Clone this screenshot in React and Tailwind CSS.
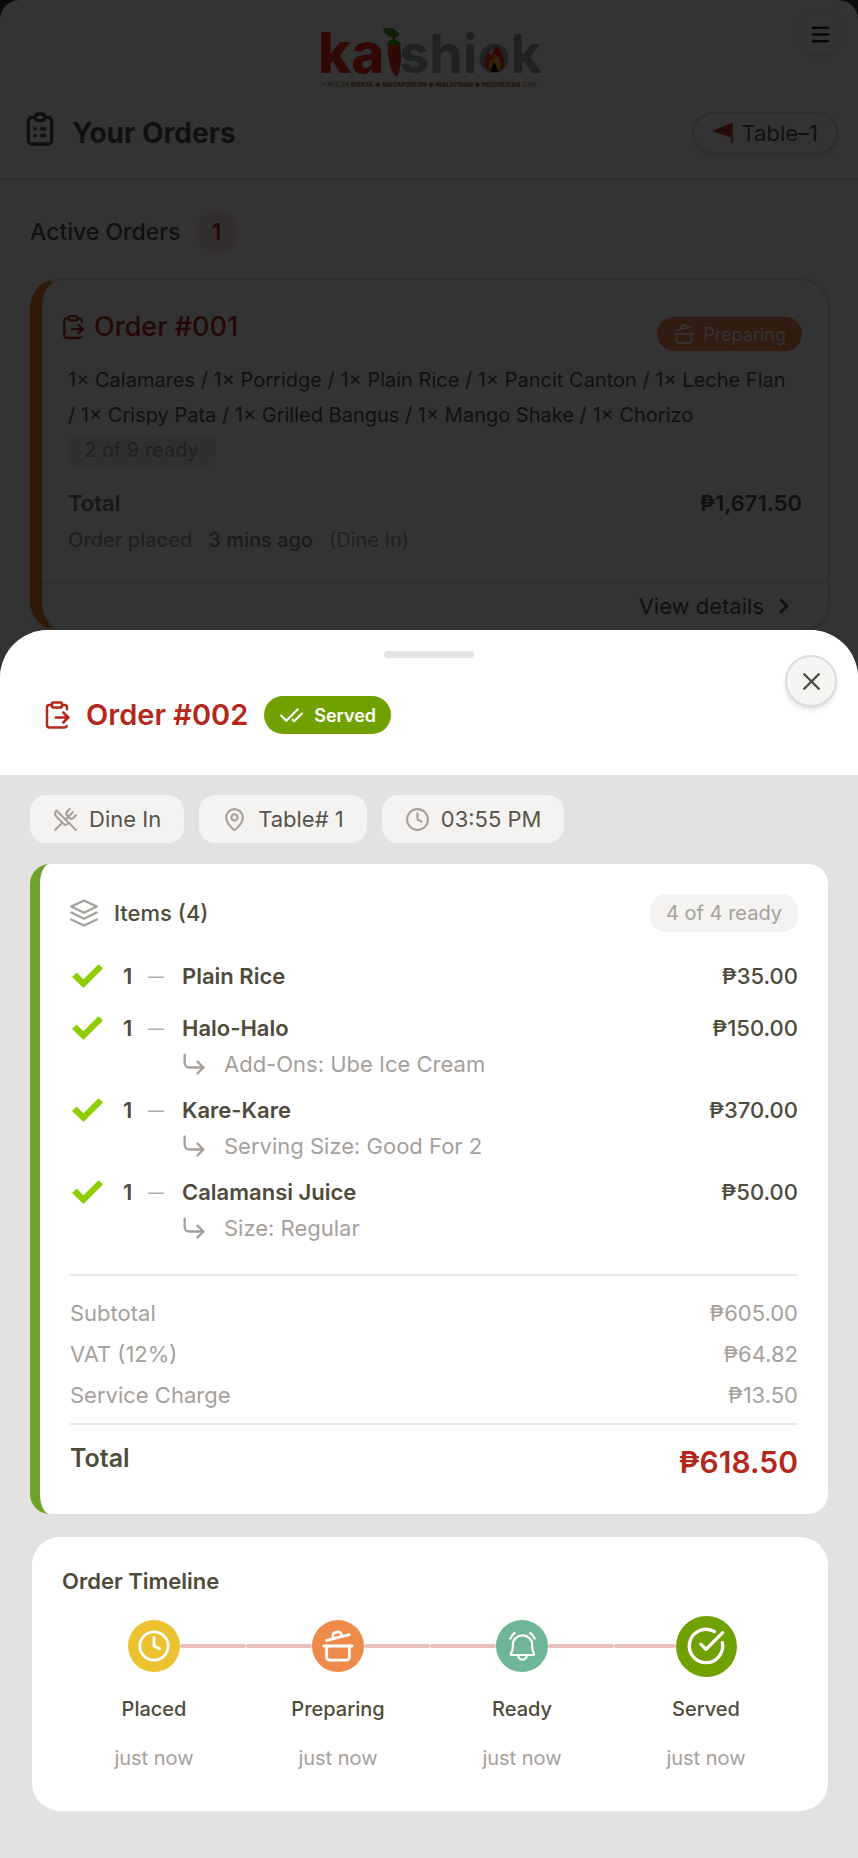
import React, { useState } from 'react';
import {
  CheckCheck,
  ChevronRight,
  CircleCheckBig,
  ClipboardPaste,
  Clock,
  CookingPot,
  CornerDownRight,
  MapPin,
  Menu,
  UtensilsCrossed,
  X,
} from 'lucide-react';
import { TbClipboardList } from 'react-icons/tb';

const activeItems = [
  'Calamares',
  'Porridge',
  'Plain Rice',
  'Pancit Canton',
  'Leche Flan',
  'Crispy Pata',
  'Grilled Bangus',
  'Mango Shake',
  'Chorizo',
];

const orderItems = [
  { qty: 1, name: 'Plain Rice', price: '₱35.00' },
  { qty: 1, name: 'Halo-Halo', price: '₱150.00', note: 'Add-Ons: Ube Ice Cream' },
  { qty: 1, name: 'Kare-Kare', price: '₱370.00', note: 'Serving Size: Good For 2' },
  { qty: 1, name: 'Calamansi Juice', price: '₱50.00', note: 'Size: Regular' },
];

const charges = [
  { label: 'Subtotal', amount: '₱605.00' },
  { label: 'VAT (12%)', amount: '₱64.82' },
  { label: 'Service Charge', amount: '₱13.50' },
];

const timeline = [
  { label: 'Placed', time: 'just now', icon: Clock, size: 34, circle: 'h-[52px] w-[52px] bg-[#edc231]' },
  { label: 'Preparing', time: 'just now', icon: CookingPot, size: 34, circle: 'h-[52px] w-[52px] bg-[#ee8a4a]' },
  { label: 'Ready', time: 'just now', icon: BellIcon, size: 29, circle: 'h-[52px] w-[52px] bg-[#6fb597]' },
  { label: 'Served', time: 'just now', icon: CircleCheckBig, size: 40, circle: 'h-[61px] w-[61px] bg-[#70a100]' },
];

function Logo() {
  return (
    <svg
      width="224"
      height="64"
      viewBox="0 0 224 64"
      role="img"
      aria-label="kaishiok"
      fontFamily="Inter, sans-serif"
      className="overflow-visible"
    >
      <text x="-3" y="45" fontSize="56" fontWeight="800" fill="#f03018">ka</text>
      <text x="78" y="45" fontSize="54" fontWeight="700" fill="#a3a3a8">shiok</text>
      {/* chili */}
      <path d="M67 18c1-6 10-7 12 0 2 10 1 24-3 31-3-2-6-7-7-13-2-7-3-12-2-18z" fill="#f03018" />
      <path d="M66 18c0-5 3-6 6-6 4 0 8 1 8 6-3-2-4-1-6 1-2-3-5-3-8-1z" fill="#4f9a1c" />
      <path d="M73 14c-1-4 1-7 5-8" stroke="#4f9a1c" strokeWidth="2.5" fill="none" />
      <path d="M62 1c8-3 15 0 15 7-6 3-13 0-15-7z" fill="#4f9a1c" />
      {/* flame */}
      <path d="M174 16c5 5 9 11 9 17 0 7-4 11-9 11s-11-4-10-11c0-4 2-6 3-9l3 3c2-3 4-6 4-11z" fill="#f03018" />
      <path d="M174 26c4 3 6 7 6 11s-3 6-6 6-7-2-6-7c0-2 1-3 2-5l2 2z" fill="#f5b52a" />
      <path d="M173 34l2 3 2 7h-7l1-6z" fill="#000" />
      <text x="0" y="59" fontSize="6" fontWeight="400" fill="#9a7340">
        POPULAR <tspan fontWeight="800">BISAYA ◆ SINGAPOREAN ◆ MALAYSIAN ◆ INDONESIAN</tspan> DISH
      </text>
    </svg>
  );
}

function FlagIcon() {
  return (
    <svg width="21" height="20" viewBox="0 0 21 20" aria-hidden="true">
      <path d="M0 8 20 0v15z" fill="#c8322a" />
      <path d="M20 0v20" stroke="#b0683c" strokeWidth="2" />
    </svg>
  );
}

function StackIcon() {
  return (
    <svg width="28" height="28" viewBox="0 0 28 28" fill="none" stroke="#a6a09b" strokeWidth="2.2" strokeLinecap="round" strokeLinejoin="round" aria-hidden="true">
      <path d="M1.2 7.6 14 1.4l12.8 6.2L14 13.8z" />
      <path d="M1.2 13.6 14 19.8l12.8-6.2" />
      <path d="M1.2 20.4 14 26.6l12.8-6.2" />
    </svg>
  );
}

function DoneIcon() {
  return (
    <svg width="31" height="24" viewBox="0 0 31 24" fill="#8fcd00" stroke="#8fcd00" strokeWidth="2" strokeLinejoin="round" aria-hidden="true">
      <path d="M1.3 12.9 4.6 9.9l6.8 6.8L26.5 1.6l3.100 2.900L11.400 22.600z" />
    </svg>
  );
}

function BellIcon({ size }) {
  return (
    <svg width={size} height={size} viewBox="0 0 26 29" fill="none" stroke="currentColor" strokeWidth="2.2" strokeLinecap="round" strokeLinejoin="round" aria-hidden="true">
      <path d="M2.2 23c-.8 0-1.1-.8-.7-1.5C2.7 19.5 3.3 17.5 3.3 15v-2.300a9.700 9.300 0 0 1 19.400 0V15c0 2.500.6 4.500 1.800 6.500.4.700.1 1.500-.7 1.500z" />
      <path d="M8.8 23.500a4.200 4.200 0 0 0 8.400 0" />
      <path d="M.8 6.500C1.800 4.300 3.300 2.200 5.200 1" />
      <path d="M25.200 6.500C24.200 4.300 22.700 2.200 20.800 1" />
    </svg>
  );
}

function OrdersPage() {
  return (
    <div className="min-h-screen rounded-t-[20px] bg-white pt-4">
      <header className="border-b-2 border-[#e7e5e4]">
        <div className="relative flex h-[76px] items-start justify-center pt-3 pl-2">
          <Logo />
          <button
            type="button"
            aria-label="Open menu"
            className="absolute top-0 right-5 flex h-9 w-9 items-center justify-center rounded-lg text-black shadow-[0_1px_6px_rgba(0,0,0,0.15)]"
          >
            <Menu size={23} strokeWidth={2} />
          </button>
        </div>
        <div className="flex items-center justify-between px-5 pt-5 pb-6">
          <h1 className="flex items-center gap-3 text-[28px] leading-[42px] font-bold text-[#57534a]">
            <TbClipboardList size={40} className="-mt-2" />
            Your Orders
          </h1>
          <button
            type="button"
            className="flex h-[42px] items-center gap-2 rounded-full border-2 border-[#dcdad6] px-[18px] text-[22px] text-[#57534a] shadow-md"
          >
            <FlagIcon />
            Table–1
          </button>
        </div>
      </header>

      <main className="px-7 pt-[30px]">
        <h2 className="flex items-center gap-4 px-[2px] text-[23px] font-medium text-[#57534a]">
          Active Orders
          <span className="flex h-[44px] w-[40px] items-center justify-center rounded-full bg-[#f3e6e0] font-semibold text-[#b3281a]">1</span>
        </h2>

        <article className="mt-6 ml-[2px] rounded-[30px] border-2 border-l-[12px] border-[#e7e5e4] border-l-[#e6842f] text-[#57534a] shadow-md">
          <div className="px-[26px] pt-[30px] pb-[22px]">
            <div className="flex items-start justify-between">
              <h3 className="-ml-2 flex items-center gap-2 text-[27px] leading-[34px] font-medium text-[#b3281a]">
                <ClipboardPaste size={26} />
                Order #001
              </h3>
              <span className="mt-[7px] flex h-[34px] items-center gap-2 rounded-full bg-[#f08a54] px-4 text-[18px] text-white">
                <CookingPot size={22} strokeWidth={2} />
                Preparing
              </span>
            </div>
            <p className="mt-3 text-[20px] leading-[35px]">
              {activeItems.map((item, index) => (
                <React.Fragment key={item}>
                  {index > 0 && ' '}
                  <span className="whitespace-nowrap">
                    {index > 0 && '/ '}1× {item}
                  </span>
                </React.Fragment>
              ))}
            </p>
            <span className="mt-px flex h-8 w-fit items-center rounded-lg bg-[#f0efed] px-4 text-[20px] text-[#a6a09b]">2 of 9 ready</span>
            <p className="mt-[19px] flex justify-between text-[22px] leading-[36px] font-semibold">
              <span className="text-[#79756c]">Total</span>
              <span>₱1,671.50</span>
            </p>
            <p className="flex gap-4 text-[20px] leading-[38px] text-[#a6a09b]">
              <span className="font-medium">Order placed</span>
              <span className="font-medium text-[#8d8881]">3 mins ago</span>
              <span>(Dine In)</span>
            </p>
          </div>
          <div className="flex h-12 items-center justify-end border-t-2 border-[#e7e5e4] px-8">
            <button type="button" className="flex items-center gap-2 text-[22px]">
              View details
              <ChevronRight size={24} strokeWidth={3} />
            </button>
          </div>
        </article>
      </main>
    </div>
  );
}

function Chip({ icon: Icon, children }) {
  return (
    <span className="flex h-12 items-center gap-[11px] rounded-2xl bg-[#f4f3f1] px-[23px] text-[22px] text-[#57534a]">
      <Icon size={25} strokeWidth={2} className="text-[#a6a09b]" />
      {children}
    </span>
  );
}

function ItemsCard() {
  return (
    <section className="mt-[21px] rounded-[20px] border-l-[10px] border-[#6fa229] bg-white p-[30px] text-[22px] text-[#4f4b3b]">
      <div className="flex items-center justify-between">
        <h3 className="flex items-center gap-4 font-medium">
          <StackIcon />
          Items (4)
        </h3>
        <span className="flex h-[38px] items-center rounded-2xl bg-[#f4f3f1] px-4 text-[20px] text-[#a6a09b]">4 of 4 ready</span>
      </div>

      <ul className="mt-[25px] flex flex-col">
        {orderItems.map((item) => (
          <li key={item.name} className={item.note ? 'pb-[10px]' : 'pb-[14px]'}>
            <div className="flex h-[38px] items-center pl-[2px] font-semibold">
              <DoneIcon />
              <span className="ml-5 w-[25px]">{item.qty}</span>
              <span className="w-[34px] text-[16px] font-medium text-[#b5afa9]">—</span>
              <span className="flex-1">{item.name}</span>
              <span className="font-medium">{item.price}</span>
            </div>
            {item.note && (
              <div className="flex h-[34px] items-center gap-4 pl-[110px] text-[#a6a09b]">
                <CornerDownRight size={28} strokeWidth={2} />
                {item.note}
              </div>
            )}
          </li>
        ))}
      </ul>

      <dl className="mt-[19px] border-y-2 border-[#ebeae8] pt-[17px] pb-[7px] text-[#a6a09b]">
        {charges.map((charge) => (
          <div key={charge.label} className="flex h-[41px] items-center justify-between">
            <dt>{charge.label}</dt>
            <dd>{charge.amount}</dd>
          </div>
        ))}
      </dl>
      <p className="mt-[15px] flex items-start justify-between font-semibold">
        <span className="text-[25px] leading-9">Total</span>
        <span className="text-[30px] leading-[44px] text-[#b3281a]">₱618.50</span>
      </p>
    </section>
  );
}

function TimelineCard() {
  return (
    <section className="mt-[23px] ml-[2px] rounded-[28px] bg-white px-[30px] pt-7 pb-[38px] text-[#4f4b3b]">
      <h3 className="text-[22px] leading-8 font-semibold">Order Timeline</h3>
      <ol className="mt-4 grid grid-cols-4">
        {timeline.map((step, index) => (
          <li key={step.label} className="flex flex-col items-center">
            <div className="flex h-[66px] w-full items-center">
              <span className={index > 0 ? 'h-1 flex-1 rounded-full bg-[#e9bfba]' : 'flex-1'} />
              <span className={`flex items-center justify-center rounded-full text-white ${step.circle}`}>
                <step.icon size={step.size} />
              </span>
              <span className={index < timeline.length - 1 ? 'h-1 flex-1 rounded-full bg-[#e9bfba]' : 'flex-1'} />
            </div>
            <span className="mt-[15px] text-[20px] leading-[30px] font-medium">{step.label}</span>
            <span className="mt-[19px] text-[20px] leading-[30px] text-[#a6a09b]">{step.time}</span>
          </li>
        ))}
      </ol>
    </section>
  );
}

function OrderSheet({ onClose }) {
  return (
    <div role="dialog" aria-label="Order #002" className="fixed inset-x-0 bottom-0 rounded-t-[48px] bg-[#e3e2e0]">
      <header className="relative rounded-t-[48px] bg-white pt-[21px] pb-[38px]">
        <div className="mx-auto h-[7px] w-[90px] rounded-full bg-[#e3e3e1]" />
        <button
          type="button"
          aria-label="Close"
          onClick={onClose}
          className="absolute top-[25px] right-[21px] flex h-[52px] w-[52px] items-center justify-center rounded-full border-2 border-[#dddcd8] bg-[#f5f5f3] text-[#4f4b3b] shadow-md"
        >
          <X size={29} strokeWidth={2} />
        </button>
        <div className="mt-[35px] flex items-center gap-4 pl-[42px]">
          <h2 className="flex h-11 items-center gap-[14px] text-[29px] font-semibold text-[#b3281a]">
            <ClipboardPaste size={30} strokeWidth={2} />
            Order #002
          </h2>
          <span className="flex h-[38px] items-center gap-[10px] rounded-full bg-[#70a100] px-[15px] text-[18px] font-semibold text-white">
            <CheckCheck size={25} strokeWidth={2} />
            Served
          </span>
        </div>
      </header>
      <div className="px-[30px] pt-5 pb-[47px]">
        <div className="flex gap-[15px]">
          <Chip icon={UtensilsCrossed}>Dine In</Chip>
          <Chip icon={MapPin}>Table# 1</Chip>
          <Chip icon={Clock}>03:55 PM</Chip>
        </div>
        <ItemsCard />
        <TimelineCard />
      </div>
    </div>
  );
}

function App() {
  const [open, setOpen] = useState(true);

  return (
    <div className="bg-[#3a3a3a] font-['Inter',sans-serif]">
      <OrdersPage />
      {open && (
        <>
          <div className="fixed inset-0 bg-black/80" />
          <OrderSheet onClose={() => setOpen(false)} />
        </>
      )}
    </div>
  );
}

export default App;
